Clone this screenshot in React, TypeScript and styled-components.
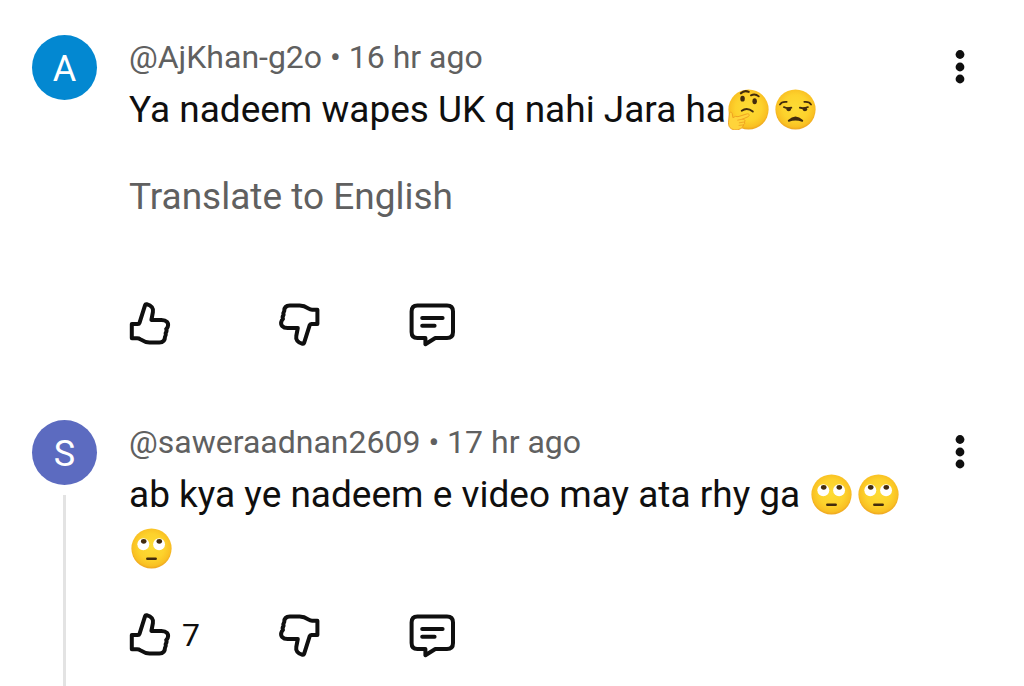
import React from "react";
import styled, { createGlobalStyle } from "styled-components";

const GlobalStyle = createGlobalStyle`
  *, *::before, *::after { box-sizing: border-box; }
  body {
    margin: 0;
    background: #fff;
    color: #0f0f0f;
    font-family: Roboto, "Liberation Sans", sans-serif;
  }
  button { font: inherit; color: inherit; }
`;

const CommentList = styled.main`
  display: flex;
  flex-direction: column;
  min-height: 100vh;
  padding: 35px 32px 0;
`;

const Comment = styled.article`
  display: flex;
  gap: 32px;
  &:last-child { flex: 1; }
`;

const AvatarColumn = styled.div`
  display: flex;
  flex-direction: column;
  align-items: center;
  gap: 10px;
  flex: none;
`;

const Avatar = styled.div<{ $color: string }>`
  display: flex;
  align-items: center;
  justify-content: center;
  width: 65px;
  height: 65px;
  padding-top: 2px;
  border-radius: 50%;
  background: ${(p) => p.$color};
  color: #fff;
  font-size: 36px;
  line-height: 40px;
`;

const ThreadLine = styled.div`
  flex: 1;
  width: 3px;
  background: #e3e3e3;
`;

const Content = styled.div<{ $spaced?: boolean }>`
  flex: 1;
  min-width: 0;
  padding: 2px 0 ${(p) => (p.$spaced ? 73 : 28)}px;
`;

const Meta = styled.header`
  color: #606060;
  font-size: 32px;
  line-height: 40px;
`;

const Message = styled.p`
  margin: 6px 0 0;
  font-size: 37px;
  line-height: 54px;
`;

const TranslateButton = styled.button`
  display: block;
  margin: 37px 0 0;
  padding: 0;
  border: 0;
  background: none;
  color: #606060;
  font-size: 37px;
  line-height: 46px;
`;

const Actions = styled.div<{ $spaced?: boolean }>`
  display: grid;
  grid-template-columns: 150px 131px 48px;
  margin: ${(p) => (p.$spaced ? 81 : 36)}px 0 0 -1px;
`;

const ActionButton = styled.button`
  display: flex;
  align-items: center;
  justify-self: start;
  gap: 10px;
  padding: 0;
  border: 0;
  background: none;
  font-size: 32px;
  line-height: 46px;
`;

const MenuButton = styled.button`
  flex: none;
  align-self: flex-start;
  width: 24px;
  height: 40px;
  margin: 12px 20px 0 0;
  padding: 0;
  border: 0;
  background: none;
`;

const Icon = styled.svg`
  display: block;
  fill: none;
  stroke: #0f0f0f;
  stroke-width: 4;
  stroke-linejoin: round;
  stroke-linecap: round;
`;

const EmojiSvg = styled.svg`
  width: 41px;
  height: 41px;
  margin: 0 4px 0 2px;
  vertical-align: -8px;
`;

const THUMB =
  "M3.8 23H9.9Q11.1 23 11.5 21.8L17.1 4.2Q17.5 3 18.8 3.3C23.5 4.4 25.7 7.4 24.9 11.2L23.4 19H33.5C38.5 19 41 22 39.8 25.6Q39.4 27 38.2 28Q39.2 30 37.6 32.2Q38.3 34 37 35.8C37 39.4 35 41.4 31.4 41.4H21.5C17.9 41.4 15.1 40 12.5 38.3Q10.9 37.2 9.1 37.2H3.8Z";

const ThumbIcon = ({ down }: { down?: boolean }) => (
  <Icon width="44" height="46" viewBox="0 0 44 46" aria-hidden="true">
    <path d={THUMB} transform={down ? "rotate(180 21.6 23)" : undefined} />
  </Icon>
);

const ReplyIcon = () => (
  <Icon width="48" height="46" viewBox="0 0 48 46" aria-hidden="true">
    <path d="M8.4 4.5H38Q44 4.5 44 10.5V31Q44 37 38 37H26.3L16.4 43.2V37H8.4Q2.6 37 2.6 31V10.5Q2.6 4.5 8.4 4.5Z" />
    <path d="M13.2 17H33.6M13.2 24.8H25.6" />
  </Icon>
);

const MenuIcon = () => (
  <svg width="24" height="40" viewBox="0 0 24 40" aria-hidden="true">
    <g fill="#0f0f0f">
      <circle cx="12" cy="7.5" r="4.4" />
      <circle cx="12" cy="20" r="4.4" />
      <circle cx="12" cy="32" r="4.4" />
    </g>
  </svg>
);

const FaceGradient = ({ id }: { id: string }) => (
  <defs>
    <radialGradient id={id} cx="50%" cy="46%" r="54%">
      <stop offset="0" stopColor="#fddb35" />
      <stop offset="0.6" stopColor="#fdd22c" />
      <stop offset="0.88" stopColor="#f9c023" />
      <stop offset="1" stopColor="#eda31f" />
    </radialGradient>
  </defs>
);

type EmojiKind = "thinking" | "unamused" | "rolling";

const LABELS: Record<EmojiKind, string> = {
  thinking: "Thinking face",
  unamused: "Unamused face",
  rolling: "Face with rolling eyes",
};

const Emoji = ({ kind }: { kind: EmojiKind }) => {
  const id = React.useId();
  return (
    <EmojiSvg viewBox="0 0 40 40" role="img" aria-label={LABELS[kind]}>
      <FaceGradient id={id} />
      <circle cx="20" cy="20" r="19.6" fill={`url(#${id})`} />
      {kind === "rolling" && (
        <>
          <circle cx="12" cy="15.8" r="5.8" fill="#fff" />
          <circle cx="27.4" cy="15.8" r="5.8" fill="#fff" />
          <ellipse cx="12.4" cy="13" rx="2.7" ry="2.3" fill="#422b0d" />
          <ellipse cx="27.6" cy="13" rx="2.7" ry="2.3" fill="#422b0d" />
          <path d="M16 30H24" stroke="#422b0d" strokeWidth="2.6" strokeLinecap="round" />
        </>
      )}
      {kind === "unamused" && (
        <g fill="none" stroke="#422b0d" strokeLinecap="round">
          <path d="M4.8 15.2Q6.6 12 11.4 12.6M35.2 15.2Q33.4 12 28.6 12.6" strokeWidth="1.7" />
          <path d="M8.6 17.6Q12 19.4 16 18.2M24.2 18.2Q28 19.4 32.2 17.6" strokeWidth="1.7" />
          <ellipse cx="13.4" cy="19.8" rx="2.2" ry="2" fill="#422b0d" stroke="none" />
          <ellipse cx="29.2" cy="19.8" rx="2.2" ry="2" fill="#422b0d" stroke="none" />
          <path d="M13.4 31Q20 24.4 26.6 31Q20 28.6 13.4 31Z" fill="#422b0d" strokeWidth="1.8" strokeLinejoin="round" />
        </g>
      )}
      {kind === "thinking" && (
        <>
          <g fill="none" stroke="#422b0d" strokeLinecap="round">
            <path d="M12.6 4.2Q16 .8 20.2 2.8" strokeWidth="2" />
            <path d="M22.4 6.2Q26.5 4.2 30 7.2" strokeWidth="1.8" />
            <path d="M13.4 21.2Q18.6 17.4 24.2 22" strokeWidth="1.9" />
          </g>
          <ellipse cx="14.2" cy="9.4" rx="2.2" ry="2.9" fill="#422b0d" />
          <ellipse cx="26" cy="12" rx="2.2" ry="2.9" fill="#422b0d" />
          <path
            d="M1.2 24.4C1.2 22.2 4 22 4.2 24.4L4.8 28Q7 26 9.8 27L18.8 24.2C20.8 23.8 21.4 26.2 19.6 27L14.2 29.4C17 29.8 17 31.2 15.8 32.2C17 33.4 16 34.6 15 35C14.8 38.2 10.4 40.2 6.4 39.8C2.6 39.4 .4 37 .5 33Z"
            fill="#ffd43a"
            stroke="#ee9f20"
            strokeWidth="0.9"
            strokeLinejoin="round"
          />
          <path d="M9.4 30.4L14.2 29.4M11 33L15.8 32.2M10.8 35.5L15 35" stroke="#ee9f20" strokeWidth="0.8" strokeLinecap="round" />
        </>
      )}
    </EmojiSvg>
  );
};

interface CommentData {
  initial: string;
  color: string;
  author: string;
  age: string;
  text: string;
  emojis: EmojiKind[];
  likes?: number;
  translatable?: boolean;
  threaded?: boolean;
}

const COMMENTS: CommentData[] = [
  {
    initial: "A",
    color: "#0388d1",
    author: "@AjKhan-g2o",
    age: "16 hr ago",
    text: "Ya nadeem wapes UK q nahi Jara ha",
    emojis: ["thinking", "unamused"],
    translatable: true,
  },
  {
    initial: "S",
    color: "#5c6bc0",
    author: "@saweraadnan2609",
    age: "17 hr ago",
    text: "ab kya ye nadeem e video may ata rhy ga ",
    emojis: ["rolling", "rolling", "rolling"],
    likes: 7,
    threaded: true,
  },
];

export default function App() {
  return (
    <>
      <GlobalStyle />
      <CommentList>
        {COMMENTS.map((c) => (
          <Comment key={c.author}>
            <AvatarColumn>
              <Avatar $color={c.color}>{c.initial}</Avatar>
              {c.threaded && <ThreadLine />}
            </AvatarColumn>
            <Content $spaced={!c.threaded}>
              <Meta>
                {c.author} • {c.age}
              </Meta>
              <Message>
                {c.text}
                {c.emojis.map((kind, i) => (
                  <Emoji key={i} kind={kind} />
                ))}
              </Message>
              {c.translatable && <TranslateButton type="button">Translate to English</TranslateButton>}
              <Actions $spaced={c.translatable}>
                <ActionButton type="button" aria-label="Like">
                  <ThumbIcon />
                  {c.likes}
                </ActionButton>
                <ActionButton type="button" aria-label="Dislike">
                  <ThumbIcon down />
                </ActionButton>
                <ActionButton type="button" aria-label="Reply">
                  <ReplyIcon />
                </ActionButton>
              </Actions>
            </Content>
            <MenuButton type="button" aria-label="More options">
              <MenuIcon />
            </MenuButton>
          </Comment>
        ))}
      </CommentList>
    </>
  );
}
